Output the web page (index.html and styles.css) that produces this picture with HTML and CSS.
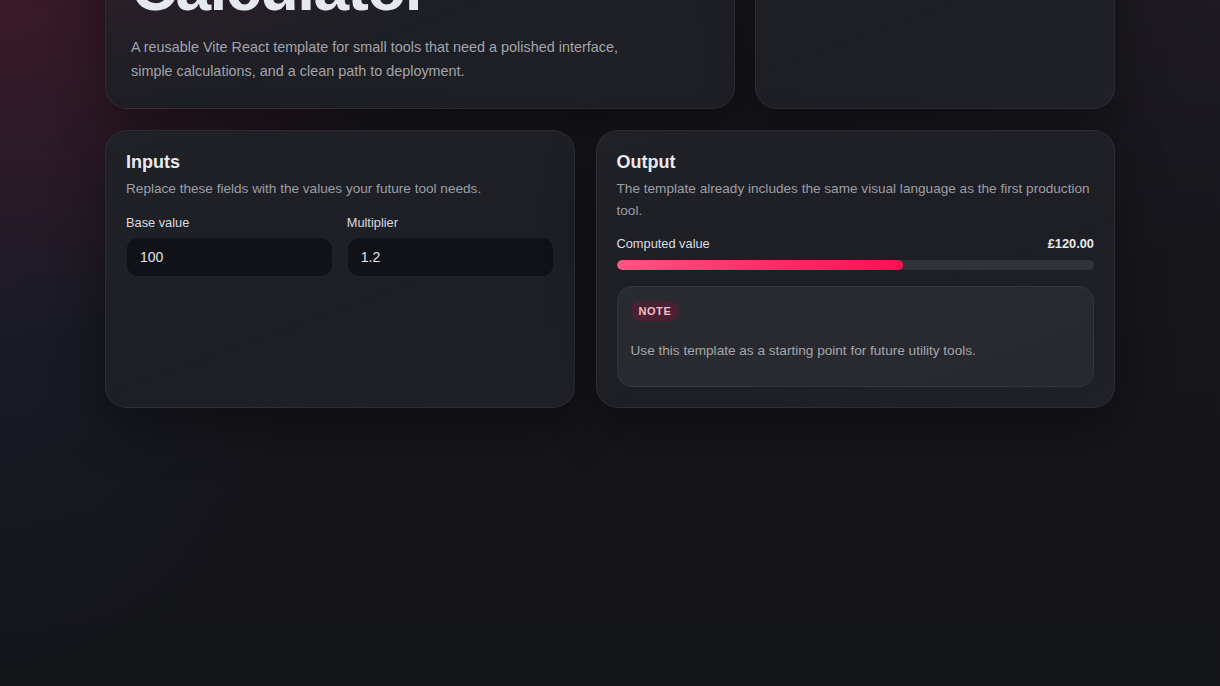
FILE: index.html
```html
<!DOCTYPE html>
<html lang="en">
<head>
  <meta charset="utf-8">
  <meta name="viewport" content="width=device-width, initial-scale=1">
  <title>Starter Template Calculator</title>
  <link rel="stylesheet" href="styles.css">
</head>
<body>
  <main class="page">
    <section class="top-row">
      <header class="card hero">
        <span class="eyebrow">Template</span>
        <h1 class="hero-title">Starter Template Calculator</h1>
        <p class="hero-text">A reusable Vite React template for small tools that need a polished interface, simple calculations, and a clean path to deployment.</p>
      </header>
      <aside class="card side">
        <span class="side-label">Status</span>
        <strong class="side-value">Ready</strong>
      </aside>
    </section>

    <section class="tool-grid" id="workspace">
      <div class="card panel">
        <h2 class="panel-title">Inputs</h2>
        <p class="panel-text">Replace these fields with the values your future tool needs.</p>
        <div class="fields">
          <label class="field">
            <span class="field-label">Base value</span>
            <input class="field-input" type="text" value="100">
          </label>
          <label class="field">
            <span class="field-label">Multiplier</span>
            <input class="field-input" type="text" value="1.2">
          </label>
        </div>
      </div>

      <div class="card panel">
        <h2 class="panel-title">Output</h2>
        <p class="panel-text">The template already includes the same visual language as the first production tool.</p>
        <div class="result-row">
          <span class="result-label">Computed value</span>
          <strong class="result-value">£120.00</strong>
        </div>
        <div class="meter"><div class="meter-fill" style="width: 60%"></div></div>
        <div class="note">
          <span class="badge">Note</span>
          <p class="note-text">Use this template as a starting point for future utility tools.</p>
        </div>
      </div>
    </section>
  </main>
  <script src="app.js"></script>
</body>
</html>
```

FILE: styles.css
```css
* {
  box-sizing: border-box;
}

html,
body {
  margin: 0;
}

body {
  font-family: "Liberation Sans", Arial, sans-serif;
  color: #e8e9ee;
  background-color: #141519;
  background-image:
    radial-gradient(ellipse 420px 340px at 0% 0%, rgba(110, 28, 55, 0.42), rgba(110, 28, 55, 0) 100%),
    radial-gradient(ellipse 300px 400px at 0% 45%, rgba(30, 38, 60, 0.35), rgba(30, 38, 60, 0) 100%),
    radial-gradient(ellipse 500px 300px at 100% 0%, rgba(55, 40, 55, 0.2), rgba(55, 40, 55, 0) 100%),
    linear-gradient(180deg, #17161c 0%, #141519 100%);
  background-attachment: fixed;
}

.page {
  max-width: 1010px;
  margin: 0 auto;
  padding: 48px 0 340px;
  display: flex;
  flex-direction: column;
  gap: 21px;
}

.card {
  background: linear-gradient(160deg, #202127 0%, #1e1f25 60%, #202128 100%);
  border: 1px solid rgba(255, 255, 255, 0.06);
  border-radius: 22px;
  box-shadow: 0 18px 50px rgba(0, 0, 0, 0.35);
}

/* Header row */
.top-row {
  display: grid;
  grid-template-columns: minmax(0, 1.75fr) minmax(0, 1fr);
  gap: 20px;
}

.hero {
  padding: 25px 25px 25px;
  background:
    radial-gradient(ellipse 420px 260px at 0% 0%, rgba(90, 30, 50, 0.45), rgba(90, 30, 50, 0) 100%),
    linear-gradient(160deg, #221f26 0%, #1e1f25 60%, #1f2026 100%);
}

.eyebrow {
  display: inline-block;
  padding: 5px 10px;
  border-radius: 999px;
  background: rgba(255, 60, 110, 0.16);
  color: #f3b9c9;
  font-size: 11px;
  font-weight: 700;
  letter-spacing: 0.08em;
  text-transform: uppercase;
}

.hero-title {
  margin: 16px 0 15px;
  font-size: 64px;
  line-height: 1;
  font-weight: 700;
  letter-spacing: -0.025em;
  color: #e6e8f0;
}

.hero-text {
  margin: 0;
  max-width: 500px;
  font-size: 14.4px;
  line-height: 24px;
  color: #a2a4ac;
}

.side {
  padding: 25px;
  display: flex;
  flex-direction: column;
  gap: 6px;
}

.side-label {
  font-size: 13px;
  color: #9b9da5;
}

.side-value {
  font-size: 22px;
  color: #e8e9ee;
}

/* Tool panels */
.tool-grid {
  display: grid;
  grid-template-columns: minmax(0, 47fr) minmax(0, 52fr);
  gap: 21px;
  scroll-margin-top: 130px;
}

.panel {
  padding: 20px;
  display: flex;
  flex-direction: column;
}

.panel-title {
  margin: 0 0 5px;
  font-size: 18px;
  line-height: 22px;
  font-weight: 700;
  color: #e9eaf0;
}

.panel-text {
  margin: 0 0 15px;
  font-size: 13.6px;
  line-height: 22px;
  color: #9c9ea6;
}

.fields {
  display: grid;
  grid-template-columns: minmax(0, 1fr) minmax(0, 1fr);
  gap: 14px;
}

.field {
  display: flex;
  flex-direction: column;
  gap: 6px;
  min-width: 0;
}

.field-label {
  font-size: 12.8px;
  line-height: 16px;
  color: #d9dae0;
}

.field-input {
  width: 100%;
  min-width: 0;
  height: 40px;
  padding: 0 13px;
  border: 1px solid rgba(255, 255, 255, 0.07);
  border-radius: 12px;
  background: #111217;
  color: #e4e5ea;
  font-family: inherit;
  font-size: 14px;
  outline: none;
}

.result-row {
  display: flex;
  justify-content: space-between;
  align-items: center;
  margin-top: -2px;
  font-size: 12.8px;
  line-height: 18px;
}

.result-label {
  color: #dcdde2;
}

.result-value {
  color: #e9eaf0;
  font-weight: 700;
}

.meter {
  margin-top: 7px;
  height: 10px;
  border-radius: 5px;
  background: #32333a;
  overflow: hidden;
}

.meter-fill {
  height: 100%;
  border-radius: 5px;
  background: linear-gradient(90deg, #ff5584 0%, #ff2f68 50%, #ff0f55 100%);
}

.note {
  margin-top: 16px;
  padding: 14px 13px;
  border: 1px solid rgba(255, 255, 255, 0.06);
  border-radius: 16px;
  background: linear-gradient(160deg, #2a2b31 0%, #28292f 100%);
}

.badge {
  display: inline-block;
  height: 20px;
  padding: 0 8px;
  border-radius: 10px;
  background: #4a2131;
  color: #f3bccb;
  font-size: 11px;
  line-height: 20px;
  font-weight: 700;
  letter-spacing: 0.05em;
  text-transform: uppercase;
}

.note-text {
  margin: 19px 0 10px;
  font-size: 13.6px;
  line-height: 22px;
  color: #a4a6ad;
}
```

FILE: app.js
```js
// Open the page with the calculator panels in view.
document.getElementById('workspace').scrollIntoView({ block: 'start' });
```
